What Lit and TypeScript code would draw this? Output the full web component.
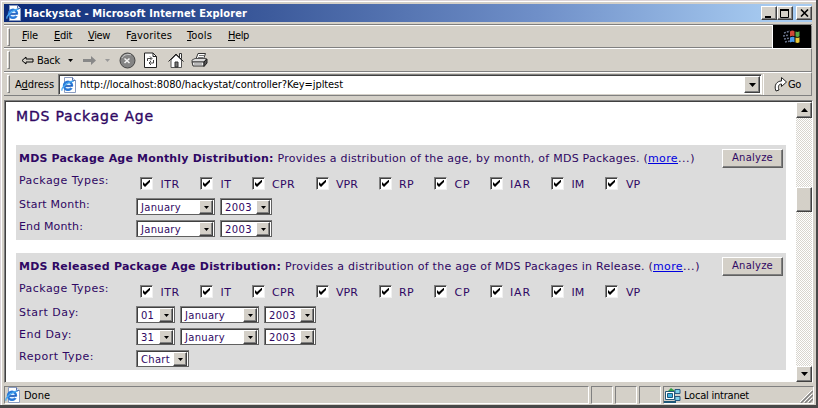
import { LitElement, html, css, svg } from "lit";
import { customElement, property } from "lit/decorators.js";

/** Single line of text, tracked so that it fills a given width. */
@customElement("fit-text")
class FitText extends LitElement {
  @property({ type: Number }) w = 0;
  @property() text = "";
  @property({ type: Number }) mnemonic = -1;
  static styles = css`
    :host { display: block; white-space: pre; flex: none; }
    .t { display: inline-block; text-decoration: inherit; }
    .u { text-decoration: underline; }
  `;
  updated() {
    const el = this.renderRoot.querySelector(".t") as HTMLElement;
    el.style.letterSpacing = "0px";
    const natural = el.getBoundingClientRect().width;
    if (this.w) {
      el.style.letterSpacing = `${(this.w - natural) / this.text.length}px`;
      this.style.width = `${this.w}px`;
    }
  }
  render() {
    const m = this.mnemonic;
    return html`<span class="t">${m < 0 ? this.text : html`${this.text.slice(0, m)}<span class="u">${this.text[m]}</span>${this.text.slice(m + 1)}`}</span>`;
  }
}

const t = (text: string, w: number, mnemonic = -1) =>
  html`<fit-text .text=${text} .w=${w} .mnemonic=${mnemonic}></fit-text>`;

const ieIcon = html`<svg width="16" height="16" viewBox="0 0 16 16">
  <path d="M3.5 .5h8l3 3v12h-11z" fill="#fff" stroke="#8a9cc0"/>
  <path d="M11.5 .5v3h3" fill="#d8e4f8" stroke="#5a70a8"/>
  <ellipse cx="7" cy="8.800" rx="4" ry="4" fill="#e4f2ff" stroke="#2878d8" stroke-width="2.4"/>
  <path d="M4 9h7" stroke="#1c58b8" stroke-width="1.700"/>
  <path d="M9.500 10.400h3" stroke="#fff" stroke-width="1.400"/>
  <path d="M1.2 13.600C-.5 11.500 8 3.500 12.700 4.300" fill="none" stroke="#48a8f0" stroke-width="1.300"/>
</svg>`;

const arrow = svg`<path d="M0 0h7L3.500 4z"/>`;

const MENU: [string, number, number][] = [
  ["File", 16, 0], ["Edit", 18, 0], ["View", 22, 0],
  ["Favorites", 46, 1], ["Tools", 25, 0], ["Help", 21, 0],
];

const TYPES: [string, number, number, number][] = [
  ["ITR", 60, 20.5, 19], ["IT", 52, 20.5, 11], ["CPR", 64, 20, 23], ["VPR", 63, 20, 22],
  ["RP", 55, 20, 15], ["CP", 56, 20.5, 16], ["IAR", 61, 20, 21], ["IM", 54, 20.5, 13], ["VP", 60, 21, 14],
];

type Sel = [string, number, number];
interface Panel { title: string; titleW: number; desc: string; descW: number; height: number; rows: [string, number, Sel[]][]; }

const PANELS: Panel[] = [
  {
    title: "MDS Package Age Monthly Distribution:", titleW: 254.5,
    desc: "Provides a distribution of the age, by month, of MDS Packages. (", descW: 370.5, height: 95,
    rows: [
      ["Start Month:", 71, [["January", 79, 40], ["2003", 52, 27]]],
      ["End Month:", 64, [["January", 79, 40], ["2003", 52, 27]]],
    ],
  },
  {
    title: "MDS Released Package Age Distribution:", titleW: 262,
    desc: "Provides a distribution of the age of MDS Packages in Release. (", descW: 368, height: 117,
    rows: [
      ["Start Day:", 60, [["01", 39, 13], ["January", 79, 40], ["2003", 52, 27]]],
      ["End Day:", 53, [["31", 39, 13], ["January", 79, 40], ["2003", 52, 27]]],
      ["Report Type:", 75, [["Chart", 53, 29]]],
    ],
  },
];

@customElement("app-root")
class AppRoot extends LitElement {
  static styles = css`
    :host { display: block; width: 818px; height: 408px; overflow: hidden; font: 11px/14px "DejaVu Sans Condensed", "DejaVu Sans", sans-serif; font-stretch: condensed; color: #000; }
    * { box-sizing: border-box; }
    svg { display: block; flex: none; }
    .window { width: 818px; height: 408px; background: #d4d0c8; display: flex; flex-direction: column; padding: 4px 4px 0 4px; border-right: 2px solid #484848; border-bottom: 3px solid #484848; box-shadow: inset 1px 1px #dcd4d8, inset 2px 2px #fff; }
    .title { height: 18px; width: 808px; flex: none; display: flex; align-items: center; background: linear-gradient(90deg, #0b2a78, #3d5b9c 33%, #6f8fc8 66%, #a6caf0 95%); color: #fff; font-weight: bold; padding-left: 2px; }
    .title fit-text { margin-left: 2px; padding-top: 1px; }
    .ctl { margin-left: auto; display: flex; padding-right: 0; }
    .btn { background: #d4d0c8; border: 1px solid; border-color: #fff #404040 #404040 #fff; box-shadow: inset -1px -1px #808080; display: flex; align-items: center; justify-content: center; flex: none; }
    .ctl .btn { width: 16px; height: 14px; }
    .ctl .close { margin-left: 3px; }
    .bars { width: 808px; flex: none; margin-top: 2px; border-top: 1px solid #808080; }
    .bar { height: 24px; display: flex; align-items: center; border-top: 1px solid #fff; border-bottom: 1px solid #808080; border-right: 1px solid #808080; }
    .grip { width: 3px; height: 18px; margin-left: 3px; border: 1px solid; border-color: #fff #808080 #808080 #fff; flex: none; }
    .menu { height: 23px; }
    .items { display: grid; grid-template-columns: 32px 34px 38px 61px 41px 30px; margin: -2px 0 0 12px; }
    .flag { margin-left: auto; height: 23px; width: 39px; background: #000; border-left: 1px solid #fff; display: flex; align-items: center; justify-content: center; }
    .tools .back { margin-left: 11px; display: flex; align-items: center; gap: 3px; }
    .tools fit-text, .address > fit-text, .go fit-text { padding-top: 1px; }
    .field { width: 704px; height: 21px; background: #fff; border: 1px solid #808080; border-right-color: #fff; border-bottom-color: #d4d0c8; box-shadow: inset 1px 1px #404040; display: flex; align-items: center; padding: 1px 1px 0 2px; margin-left: 4px; }
    .field fit-text { margin-left: 3px; font-size: 11px; }
    .field .btn { width: 16px; height: 17px; margin-left: auto; }
    .go { display: flex; align-items: center; border-left: 1px solid #fff; height: 21px; margin-left: 1px; padding-left: 10px; gap: 1px; }
    .view { margin-top: 4px; height: 283px; width: 809px; flex: none; background: #fff; border: 1px solid #808080; border-right-color: #fff; border-bottom-color: #d4d0c8; box-shadow: inset 1px 1px #404040; display: flex; }
    .page { flex: 1; padding: 6px 0 0 11px; font-family: "DejaVu Sans", sans-serif; font-stretch: normal; color: #2f0763; min-width: 0; }
    .h { font-size: 14px; line-height: 18px; -webkit-text-stroke: .35px #2f0763; }
    .panel { width: 770px; background: #dcdcdc; margin-bottom: 13px; padding: 2px 3px 0; }
    .h + .panel { margin-top: 20px; }
    .head { display: flex; height: 23px; align-items: center; }
    .head .b { font-weight: bold; margin-right: 4px; }
    .link { color: #0000e0; }
    .link fit-text { text-decoration: underline; }
    .head .btn { margin: -1px 0 0 auto; width: 61px; height: 19px; font-size: 10px; border-color: #fff #606060 #606060 #fff; }
    .row { display: grid; grid-template-columns: 117px 1fr; height: 22px; }
    .row > fit-text { padding-top: 1px; }
    .row.types { height: 27px; }
    .types > fit-text { padding-top: 4px; }
    .checks { display: flex; padding: 7px 0 0 4px; }
    .check { display: flex; flex: none; }
    .box { width: 13px; height: 13px; background: #fff; border: 1px solid; border-color: #808080 #f0f0f0 #f0f0f0 #808080; box-shadow: inset 1px 1px #404040; display: flex; align-items: center; justify-content: center; flex: none; }
    .check fit-text { padding-top: 1px; }
    .sels { display: flex; gap: 5px; padding-top: 1px; }
    .sel { height: 17px; background: #fff; border: 1px solid; border-color: #808080 #606060 #606060 #808080; box-shadow: inset 1px 1px #404040; display: flex; align-items: center; justify-content: space-between; padding: 1px 1px 0 4px; font-size: 10px; line-height: 13px; }
    .sel .btn { width: 14px; height: 14px; }
    .scroll { width: 16px; margin-top: 1px; background: repeating-conic-gradient(#fff 0 25%, #d8d5ce 0 50%) 0 0 / 2px 2px; display: flex; flex-direction: column; }
    .scroll .btn { width: 16px; height: 16px; }
    .thumb.btn { height: 25px; margin: 69px 0 auto; }
    .status { margin-top: 3px; width: 810px; height: 18px; flex: none; display: grid; grid-template-columns: 585px 22px 22px 22px 1fr; column-gap: 2px; }
    .cell { border: 1px solid; border-color: #808080 #fff #fff #808080; display: flex; align-items: center; gap: 3px; position: relative; }
    .cell fit-text { padding-top: 1px; }
    .resize { position: absolute; right: 0; bottom: 0; }
  `;

  select([text, w, tw]: Sel) {
    return html`<div class="sel" style="width:${w}px">${t(text, tw)}<span class="btn"><svg width="5" height="3"><path d="M0 0h5L2.500 3z"/></svg></span></div>`;
  }

  panel(p: Panel) {
    return html`<section class="panel" style="height:${p.height}px">
      <div class="head">
        <span class="b">${t(p.title, p.titleW)}</span>${t(p.desc, p.descW)}
        <span class="link">${t("more", 30)}</span>${t("...)", 17)}
        <span class="btn">${t("Analyze", 41)}</span>
      </div>
      <div class="row types">${t("Package Types:", 90)}
        <div class="checks">${TYPES.map(([n, w, off, tw]) => html`<div class="check" style="width:${w}px">
          <span class="box"><svg width="7" height="7" viewBox="0 0 7 7"><path d="M0 2v3l2 2 5-5V-.5L2 4z"/></svg></span>
          <fit-text style="margin-left:${off - 13}px" .text=${n} .w=${tw}></fit-text></div>`)}</div>
      </div>
      ${p.rows.map(([label, w, sels]) => html`<div class="row">${t(label, w)}<div class="sels">${sels.map(s => this.select(s))}</div></div>`)}
    </section>`;
  }

  render() {
    return html`<div class="window">
      <div class="title">${ieIcon}${t("Hackystat - Microsoft Internet Explorer", 223)}
        <div class="ctl">
          <span class="btn"><svg width="10" height="9"><path d="M1 7h6v2H1z"/></svg></span>
          <span class="btn"><svg width="10" height="9"><path d="M.5 1h8v7.500h-8z" fill="none" stroke="#000"/><path d="M0 0h9v2H0z"/></svg></span>
          <span class="btn close"><svg width="9" height="8"><path d="M1 .5l7 7M8 .5l-7 7" stroke="#000" stroke-width="1.600"/></svg></span>
        </div>
      </div>
      <div class="bars">
        <div class="bar menu"><i class="grip"></i><div class="items">${MENU.map(([n, w, m]) => t(n, w, m))}</div>
          <div class="flag"><svg width="18" height="16" viewBox="0 0 18 16">
            <path d="M1 4l6-2M0 7l6-1M1 10l6-1M2 13l5-1" stroke="#68728a" stroke-width="1.500" stroke-dasharray="2 1"/>
            <path d="M7 2.500c2-1.300 3-1 4.500-.3v5C10 6.500 9 6.500 7 7.500z" fill="#d04838"/>
            <path d="M12.500 2.500c1.500.6 2.500.6 4-.3v5c-1.500 1-2.500.7-4 .3z" fill="#58a848"/>
            <path d="M7 8.500c2-1 3-.8 4.500-.3v5c-1.500-.8-2.500-.8-4.500.3z" fill="#4898e8"/>
            <path d="M12.500 8.500c1.500.5 2.500.5 4-.3v5c-1.500 1-2.500.8-4 .3z" fill="#e8c838"/>
          </svg></div>
        </div>
        <div class="bar tools"><i class="grip"></i>
          <div class="back"><svg width="13" height="9"><path d="M1 4.500l4-3.500v2h7v3H5v2z" fill="#d4d0c8" stroke="#000"/></svg>${t("Back", 23)}</div>
          <svg width="5" height="3" style="margin-left:8px"><path d="M0 0h5L2.500 3z"/></svg>
          <svg width="13" height="9" style="margin-left:10px"><path d="M0 3h8V0l5 4.500L8 9V6H0z" fill="#888"/></svg>
          <svg width="5" height="3" style="margin-left:9px"><path d="M0 0h5L2.500 3z" fill="#999"/></svg>
          <svg width="17" height="17" style="margin-left:9px" viewBox="0 0 17 17"><circle cx="8.500" cy="8.500" r="7.500" fill="#848484" stroke="#444"/><path d="M3 6c2-4 7-4 9-3" stroke="#ccc" fill="none"/><path d="M5.500 6.500l5 4.500m0-4.500l-5 4.500" stroke="#f4f4f4" stroke-width="1.500"/></svg>
          <svg width="13" height="16" style="margin-left:8px" viewBox="0 0 13 16"><path d="M.5 1h8.500l3.500 3.500v11H.5z" fill="#fff" stroke="#222"/><path d="M9 1v3.500h3.500" fill="none" stroke="#222"/><path d="M3.500 9V6.500h4M6 4.500l2 2-2 2M9.500 8v3h-4m1.500-2l-2 2 2 2" fill="none" stroke="#444"/></svg>
          <svg width="16" height="16" style="margin-left:11px" viewBox="0 0 16 16"><path d="M11.500 1.500h2v5h-2z" fill="#fff" stroke="#333"/><path d="M3 8v7.500h10.500V8L8 3z" fill="#fff" stroke="#555"/><path d="M.5 9.500L8 2l7.500 7.500" fill="none" stroke="#222"/><path d="M7 10h3v5H7z" fill="#777" stroke="#333"/></svg>
          <svg width="17" height="15" style="margin-left:7px" viewBox="0 0 17 15"><path d="M5 6l2-5.500h7.500L12.500 6z" fill="#fff" stroke="#333"/><path d="M8 2.500h5M7 4.500h5" stroke="#777"/><path d="M1 7l3-1.500h11.500L13 9H1z" fill="#ddd" stroke="#555"/><path d="M1 9h12v4H2z" fill="#eee" stroke="#333"/><path d="M13 9l3-3v4l-3 3.500z" fill="#555" stroke="#222"/><path d="M3 11h8" stroke="#888"/></svg>
        </div>
        <div class="bar address"><i class="grip"></i><fit-text style="margin-left:5px" .text=${"Address"} .w=${39} .mnemonic=${1}></fit-text>
          <div class="field">${ieIcon}${t("http://localhost:8080/hackystat/controller?Key=jpltest", 263)}<span class="btn"><svg width="7" height="4">${arrow}</svg></span></div>
          <div class="go"><svg width="13" height="16" viewBox="0 0 13 16"><path d="M2 15C-.5 9 3 5 7.500 5V1.500l5 4.500-5 4.500V8C5 8 3.500 10 5 14z" fill="#fff" stroke="#222"/></svg>${t("Go", 13)}</div>
        </div>
      </div>
      <div class="view">
        <main class="page"><div class="h">${t("MDS Package Age", 138)}</div>${PANELS.map(p => this.panel(p))}</main>
        <div class="scroll"><span class="btn"><svg width="7" height="4"><path d="M0 4h7L3.500 0z"/></svg></span><span class="btn thumb"></span><span class="btn"><svg width="7" height="4">${arrow}</svg></span></div>
      </div>
      <div class="status">
        <div class="cell">${ieIcon}${t("Done", 26)}</div><div class="cell"></div><div class="cell"></div><div class="cell"></div>
        <div class="cell"><svg width="17" height="16" viewBox="0 0 17 16"><path d="M4 4l3-3 4 3z" fill="#30a040"/><path d="M1.500 4.500h9v8h-9z" fill="#fff" stroke="#205878"/><path d="M3.500 6.500h5v4h-5z" fill="#40b0e0" stroke="#205878"/><path d="M0 15h12" stroke="#205878" stroke-width="2"/><path d="M11 2.500h5v4h-5zM11 9.500h5v4h-5z" fill="#80d0e8" stroke="#285880"/></svg>${t("Local intranet", 65)}
          <svg class="resize" width="13" height="13" viewBox="0 0 13 13"><path d="M1 13L13 1M5 13l8-8M9 13l4-4" stroke="#808080" stroke-width="1.500"/><path d="M0 12L12 0M4 12l8-8M8 12l4-4" stroke="#fff"/></svg></div>
      </div>
    </div>`;
  }
}
